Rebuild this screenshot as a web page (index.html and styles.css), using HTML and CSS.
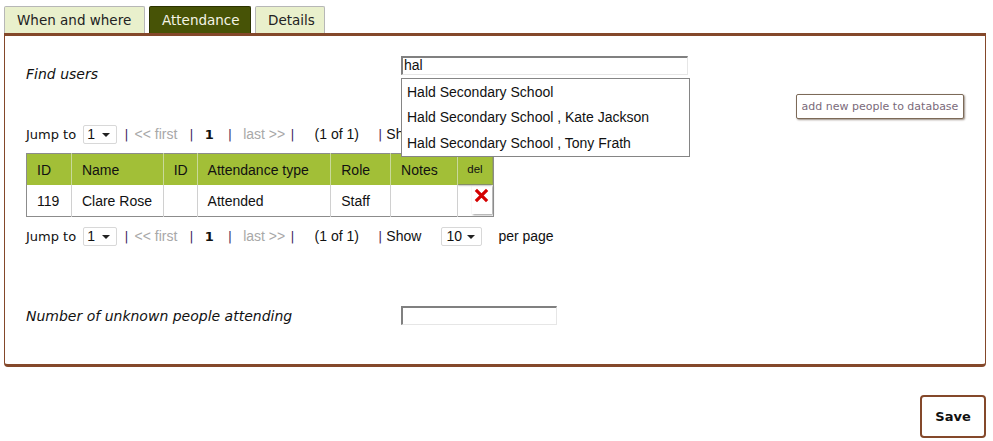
FILE: index.html
```html
<!DOCTYPE html>
<html>
<head>
<meta charset="utf-8">
<link rel="stylesheet" href="styles.css">
</head>
<body>
<div class="page">
  <div class="tabs">
    <div class="tab">When and where</div>
    <div class="tab active">Attendance</div>
    <div class="tab">Details</div>
  </div>
  <div class="panel">
    <div class="field-row find-row">
      <div class="label">Find users</div>
      <div class="input-wrap">
        <div class="textbox wide">hal</div>
        <ul class="suggest">
          <li>Hald Secondary School</li>
          <li>Hald Secondary School , Kate Jackson</li>
          <li>Hald Secondary School , Tony Frath</li>
        </ul>
      </div>
    </div>
    <div class="add-row"><div class="add-btn">add new people to database</div></div>
    <div class="pager">
      <span class="txt">Jump to</span>
      <span class="sel w1">1<span class="caret"></span></span>
      <span class="bar">|</span><span class="dim">&lt;&lt; first</span>
      <span class="bar b2">|</span><b class="cur">1</b>
      <span class="bar b3">|</span><span class="dim d2">last &gt;&gt;</span>
      <span class="bar b4">|</span><span class="count">(1 of 1)</span>
      <span class="bar b5">|</span><span class="txt">Show</span>
      <span class="sel w2">10<span class="caret"></span></span>
      <span class="txt pp">per page</span>
    </div>
    <table class="grid">
      <tr class="head">
        <th class="c1">ID</th><th class="c2">Name</th><th class="c3">ID</th><th class="c4">Attendance type</th><th class="c5">Role</th><th class="c6">Notes</th><th class="c7"><span class="delh">del</span></th>
      </tr>
      <tr>
        <td class="num">119</td><td>Clare Rose</td><td></td><td>Attended</td><td>Staff</td><td></td>
        <td class="delc"><span class="delbox"><svg width="15" height="15" viewBox="0 0 16 16"><path d="M2 2 L14 14 M14 2 L2 14" stroke="#d40000" stroke-width="3.4" stroke-linecap="butt"/></svg></span></td>
      </tr>
    </table>
    <div class="pager p2">
      <span class="txt">Jump to</span>
      <span class="sel w1">1<span class="caret"></span></span>
      <span class="bar">|</span><span class="dim">&lt;&lt; first</span>
      <span class="bar b2">|</span><b class="cur">1</b>
      <span class="bar b3">|</span><span class="dim d2">last &gt;&gt;</span>
      <span class="bar b4">|</span><span class="count">(1 of 1)</span>
      <span class="bar b5">|</span><span class="txt">Show</span>
      <span class="sel w2">10<span class="caret"></span></span>
      <span class="txt pp">per page</span>
    </div>
    <div class="field-row unknown-row">
      <div class="label">Number of unknown people attending</div>
      <div class="textbox small"></div>
    </div>
  </div>
  <div class="actions"><div class="save">Save</div></div>
</div>
</body>
</html>
```
FILE: styles.css
```css
html, body { margin: 0; padding: 0; background: #fff; }
body { font-family: "DejaVu Sans", Verdana, sans-serif; font-size: 13px; color: #111; }
.page { padding: 6px 7px 0 4px; width: 982px; }
.tabs { display: flex; gap: 4px; height: 27px; }
.tab {
  box-sizing: border-box; height: 27px; padding: 5px 12px 0 12px;
  background: #e9f0cc; border: 1px solid #b7b7b7; border-bottom: none;
  font-size: 13.5px; color: #222; border-radius: 2px 2px 0 0;
}
.tab:first-child { width: 141px; }
.tab.active { background: #475306; color: #f4f4e6; border-color: #2c3300; width: 102px; }
.tab:last-child { width: 70px; }
.panel {
  border: 1px solid #84482a; border-top-width: 3px; border-bottom-width: 3px;
  border-radius: 0 0 4px 4px; height: 334px; padding: 0 21px; position: relative;
  box-sizing: border-box;
}
.field-row { display: flex; align-items: center; }
.label { width: 375px; font-style: italic; font-size: 14px; color: #111; flex-shrink: 0; }
.find-row { margin-top: 20px; height: 19px; align-items: flex-start; }
.find-row .label { padding-top: 10px; line-height: 17px; }
.input-wrap { position: relative; }
.textbox {
  box-sizing: border-box; height: 19px; border: 1px solid #e6e6e6;
  border-top: 2px solid #808080; border-left: 2px solid #808080;
  font-family: "Liberation Sans", Arial, sans-serif; font-size: 14px; line-height: 15px; padding-left: 1px;
}
.textbox.wide { width: 287px; }
.textbox.small { width: 156px; }
.suggest {
  position: absolute; left: 0; top: 22px; margin: 0; padding: 2px 0 0 0; list-style: none;
  width: 289px; height: 79px; box-sizing: border-box; background: #fff;
  border: 1px solid #858585; z-index: 5;
  font-family: "Liberation Sans", Arial, sans-serif; font-size: 14px; color: #111;
}
.suggest li { height: 25.3px; line-height: 23px; padding-left: 5px; }
.add-row { display: flex; justify-content: flex-end; margin-top: 19px; }
.add-btn {
  box-sizing: border-box; width: 168px; height: 25px; border: 1px solid #7c6a58;
  border-radius: 2px; box-shadow: 1px 1px 2px #9a8f85; font-size: 11px; color: #7a6a7a;
  display: flex; align-items: center; justify-content: center; background: #fff;
}
.pager { display: flex; align-items: center; height: 18px; margin-top: 6px; white-space: nowrap; }
.p2 { margin-top: 10px; }
.txt { color: #111; }
.sel {
  box-sizing: border-box; height: 19px; border: 1px solid #d8d8d8; border-radius: 2px;
  font-family: "Liberation Sans", Arial, sans-serif; font-size: 14px; display: inline-flex; align-items: center;
  padding-left: 3px; position: relative; background: #fff;
}
.sel.w1 { width: 34px; margin-left: 7px; }
.sel.w2 { width: 41px; margin-left: 20px; padding-left: 4px; }
.caret { position: absolute; right: 6px; top: 7px; border: 4px solid transparent; border-top: 4px solid #222; border-bottom: 0; }
.bar { color: #3e1d5e; margin-left: 7px; }
.dim { color: #a8a8a8; font-family: "Liberation Sans", Arial, sans-serif; font-size: 14px; margin-left: 6px; }
.b2 { margin-left: 12px; }
.cur { margin-left: 11px; font-weight: bold; }
.b3 { margin-left: 14px; }
.d2 { margin-left: 11px; }
.b4 { margin-left: 5px; }
.count { margin-left: 20px; font-family: "Liberation Sans", Arial, sans-serif; font-size: 14px; }
.b5 { margin-left: 19px; }
.bar + .txt { margin-left: 4px; font-family: "Liberation Sans", Arial, sans-serif; font-size: 14px; }
.pp { margin-left: 16px; font-family: "Liberation Sans", Arial, sans-serif; font-size: 14px; }
.grid {
  border-collapse: collapse; margin-top: 10px; width: 468px;
  font-family: "Liberation Sans", Arial, sans-serif; font-size: 14px; color: #111;
  border: 1px solid #8c8c8c;
}
.grid th { background: #a2bf37; font-weight: normal; text-align: left; height: 31px; padding: 0 0 0 10px; border-left: 1px solid #c9d99a; }
.grid td { height: 31px; padding: 0 0 0 10px; border-left: 1px solid #d0d0d0; }
.grid th:first-child, .grid td:first-child { border-left: none; }
.grid .c1 { width: 34px; }
.grid .c2 { width: 81px; }
.grid .c3 { width: 23px; }
.grid .c4 { width: 123px; }
.grid .c5 { width: 49px; }
.grid .c6 { width: 56px; }
.grid .c7 { width: 35px; padding: 0; vertical-align: top; }
.delh {
  display: flex; align-items: center; justify-content: center; height: 30px; width: 34px;
  font-size: 11.5px; box-shadow: 0 1px 2px #777;
}
.delc { padding: 0 !important; vertical-align: top; }
.delbox {
  display: flex; justify-content: center; align-items: flex-start; padding-top: 3px;
  width: 20px; height: 29px; margin-left: 14px; box-sizing: border-box;
  box-shadow: 1px 1px 2px #999;
}
.unknown-row { margin-top: 61px; height: 19px; }
.actions { display: flex; justify-content: flex-end; margin-top: 28px; }
.save {
  box-sizing: border-box; width: 66px; height: 43px; border: 2px solid #84482a; border-radius: 4px;
  font-weight: bold; font-size: 13px; display: flex; align-items: center; justify-content: center; color: #111;
}
```
